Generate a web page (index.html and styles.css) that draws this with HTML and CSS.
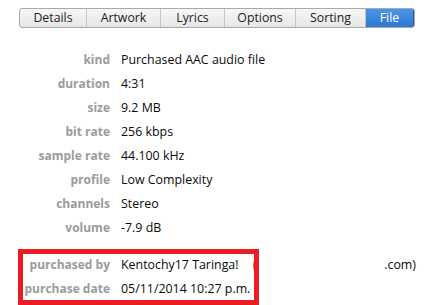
FILE: index.html
```html
<!DOCTYPE html>
<html>
<head>
<meta charset="utf-8">
<link rel="stylesheet" href="styles.css">
</head>
<body>
<div class="tabs">
  <div class="tab w1">Details</div>
  <div class="tab w2">Artwork</div>
  <div class="tab w3">Lyrics</div>
  <div class="tab w4">Options</div>
  <div class="tab w5">Sorting</div>
  <div class="tab w6 active">File</div>
</div>
<div class="info">
  <div class="row"><span class="lbl">kind</span><span class="val">Purchased AAC audio file</span></div>
  <div class="row"><span class="lbl">duration</span><span class="val">4:31</span></div>
  <div class="row"><span class="lbl">size</span><span class="val">9.2 MB</span></div>
  <div class="row"><span class="lbl">bit rate</span><span class="val">256 kbps</span></div>
  <div class="row"><span class="lbl">sample rate</span><span class="val">44.100 kHz</span></div>
  <div class="row"><span class="lbl">profile</span><span class="val">Low Complexity</span></div>
  <div class="row"><span class="lbl">channels</span><span class="val">Stereo</span></div>
  <div class="row"><span class="lbl">volume</span><span class="val">-7.9 dB</span></div>
</div>
<div class="purchase">
  <div class="row"><span class="lbl">purchased by</span><span class="val">Kentochy17 Taringa!<span class="paren">(</span><span class="mail">.com)</span></span></div>
  <div class="row"><span class="lbl">purchase date</span><span class="val">05/11/2014 10:27 p.m.</span></div>
  <div class="mark"></div>
</div>
</body>
</html>
```
FILE: styles.css
```css
html, body {
  margin: 0;
  padding: 0;
  background: #ffffff;
}
body {
  width: 432px;
  height: 305px;
  overflow: hidden;
  font-family: "Open Sans", "Noto Sans", sans-serif;
  font-size: 12px;
}
.tabs {
  display: flex;
  margin: 8px 0 0 19px;
  width: 396px;
  height: 20px;
  box-sizing: border-box;
  border: 1px solid #a9a9a9;
  border-radius: 3px;
  overflow: hidden;
  background: linear-gradient(#f7f7f7, #e6e6e6);
}
.tab {
  display: flex;
  align-items: center;
  justify-content: center;
  color: #222222;
  font-size: 12.3px;
  line-height: 18px;
  border-right: 1px solid #c4c4c4;
  box-sizing: border-box;
}
.w1 { width: 67px; }
.w2 { width: 74px; }
.w3 { width: 64px; }
.w4 { width: 71px; }
.w5 { width: 70px; }
.w6 { flex: 1; border-right: none; }
.tab.active {
  background: linear-gradient(#4a96e6, #2e76d2);
  color: #ffffff;
  border-right: 1px solid #245da8;
}
.info {
  margin-top: 20px;
}
.row {
  display: flex;
  height: 24px;
  line-height: 24px;
  white-space: nowrap;
}
.lbl {
  width: 110px;
  text-align: right;
  font-weight: 700;
  color: #9b9b9b;
  flex: none;
}
.val {
  margin-left: 11px;
  color: #0a0a0a;
  font-size: 12.4px;
}
.purchase {
  position: relative;
  margin-top: 13px;
}
.paren {
  margin-left: 14px;
  color: #8a6a20;
}
.mail {
  margin-left: 128px;
  color: #0a0a0a;
}
.mark {
  position: absolute;
  left: 18px;
  top: -4px;
  width: 241px;
  height: 56px;
  box-sizing: border-box;
  border: 5px solid #ed1c24;
}
```
